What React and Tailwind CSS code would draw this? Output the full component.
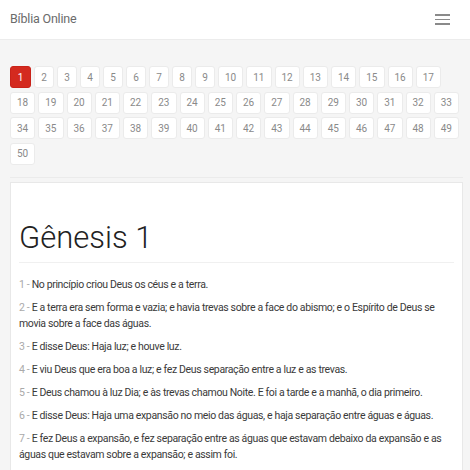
import { useState } from 'react';

const verses = [
  'No princípio criou Deus os céus e a terra.',
  'E a terra era sem forma e vazia; e havia trevas sobre a face do abismo; e o Espírito de Deus se movia sobre a face das águas.',
  'E disse Deus: Haja luz; e houve luz.',
  'E viu Deus que era boa a luz; e fez Deus separação entre a luz e as trevas.',
  'E Deus chamou à luz Dia; e às trevas chamou Noite. E foi a tarde e a manhã, o dia primeiro.',
  'E disse Deus: Haja uma expansão no meio das águas, e haja separação entre águas e águas.',
  'E fez Deus a expansão, e fez separação entre as águas que estavam debaixo da expansão e as águas que estavam sobre a expansão; e assim foi.',
];

const chapters = Array.from({ length: 50 }, (_, i) => i + 1);

export default function App() {
  const [active, setActive] = useState(1);

  return (
    <div className="min-h-[470px] bg-[#f5f5f5] font-['Roboto',sans-serif]">
      <header className="flex h-10 items-center justify-between border-b border-[#ececec] bg-white pl-[10px] pr-[20px]">
        <span className="text-[12.5px] tracking-[-0.2px] text-[#6b6b6b]">Bíblia Online</span>
        <button className="flex flex-col gap-[3px]">
          <span className="block h-[1.5px] w-[15px] bg-[#8a8a8a]" />
          <span className="block h-[1.5px] w-[15px] bg-[#8a8a8a]" />
          <span className="block h-[1.5px] w-[15px] bg-[#8a8a8a]" />
        </button>
      </header>

      <div className="mr-[7px] ml-[10px] border-b border-[#ebebeb] pt-[26px] pb-[12px]">
        <div className="flex flex-wrap gap-x-[3px] gap-y-[3.5px]">
          {chapters.map((n) => (
            <button
              key={n}
              onClick={() => setActive(n)}
              className={
                n === active
                  ? 'h-[22px] min-w-[21px] rounded-[3px] border border-[#c9231a] bg-[#d42a1f] px-[6px] text-[10px] text-white'
                  : 'h-[22px] min-w-[20px] rounded-[3px] border border-[#ebebeb] bg-white px-[6px] text-[10px] text-[#8a8a8a]'
              }
            >
              {n}
            </button>
          ))}
        </div>
      </div>

      <div className="mt-[4px] mr-[7px] ml-[10px] border border-[#e8e8e8] bg-white px-[8px] pb-4">
        <h1 className="border-b border-[#f0f0f0] pt-[35px] pb-[4px] text-[31px] leading-[40px] font-light text-[#222]">
          Gênesis 1
        </h1>
        <div className="pt-[14px]">
          {verses.map((v, i) => (
            <p key={i} className="mb-[7px] text-[10.5px] leading-[16px] tracking-[-0.35px] text-[#3a3a3a]">
              <span className="text-[#aaa]">{i + 1} - </span>
              {v}
            </p>
          ))}
        </div>
      </div>
    </div>
  );
}
